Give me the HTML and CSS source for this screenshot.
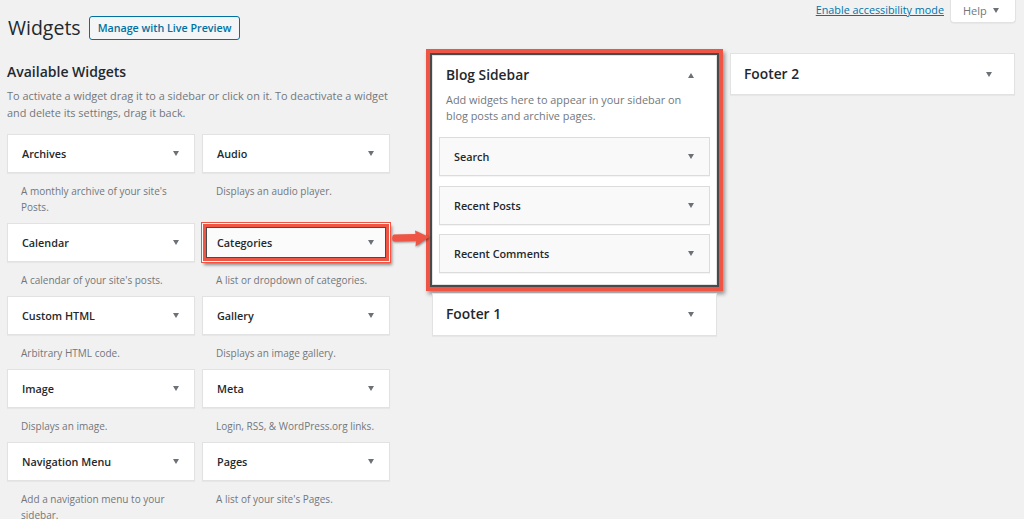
FILE: index.html
```html
<!DOCTYPE html>
<html lang="en">
<head>
<meta charset="utf-8">
<title>Widgets</title>
<link rel="stylesheet" href="styles.css">
</head>
<body>
<div class="wrap">
  <div class="topbar">
    <div class="header">
      <h1 class="page-title">Widgets</h1>
      <a class="btn-preview" href="#">Manage with Live Preview</a>
    </div>
    <div class="screen-meta">
      <a class="a11y-link" href="#">Enable accessibility mode</a>
      <button class="help-btn" type="button">Help <span class="tri tri-down"></span></button>
    </div>
  </div>

  <div class="columns">
    <section class="available">
      <h2 class="avail-title">Available Widgets</h2>
      <p class="avail-desc">To activate a widget drag it to a sidebar or click on it. To deactivate a widget<br>and delete its settings, drag it back.</p>
      <div class="widget-grid">
        <div class="widget-item">
          <div class="widget-box"><span class="widget-name">Archives</span><span class="tri tri-down"></span></div>
          <p class="widget-desc">A monthly archive of your site's Posts.</p>
        </div>
        <div class="widget-item">
          <div class="widget-box"><span class="widget-name">Audio</span><span class="tri tri-down"></span></div>
          <p class="widget-desc">Displays an audio player.</p>
        </div>
        <div class="widget-item">
          <div class="widget-box"><span class="widget-name">Calendar</span><span class="tri tri-down"></span></div>
          <p class="widget-desc">A calendar of your site's posts.</p>
        </div>
        <div class="widget-item item-annotated">
          <div class="widget-box box-highlight"><span class="widget-name">Categories</span><span class="tri tri-down"></span></div>
          <p class="widget-desc">A list or dropdown of categories.</p>
          <svg class="red-arrow" width="42" height="22" viewBox="0 0 42 22" aria-hidden="true">
            <path d="M4,6.5 C1.5,7.5 1.5,13 4,13.5 L26,13 L25.5,18.5 L39,9 L25,2.5 L25.5,6 Z" fill="#ef5545"/>
          </svg>
        </div>
        <div class="widget-item">
          <div class="widget-box"><span class="widget-name">Custom HTML</span><span class="tri tri-down"></span></div>
          <p class="widget-desc">Arbitrary HTML code.</p>
        </div>
        <div class="widget-item">
          <div class="widget-box"><span class="widget-name">Gallery</span><span class="tri tri-down"></span></div>
          <p class="widget-desc">Displays an image gallery.</p>
        </div>
        <div class="widget-item">
          <div class="widget-box"><span class="widget-name">Image</span><span class="tri tri-down"></span></div>
          <p class="widget-desc">Displays an image.</p>
        </div>
        <div class="widget-item">
          <div class="widget-box"><span class="widget-name">Meta</span><span class="tri tri-down"></span></div>
          <p class="widget-desc">Login, RSS, &amp; WordPress.org links.</p>
        </div>
        <div class="widget-item">
          <div class="widget-box"><span class="widget-name">Navigation Menu</span><span class="tri tri-down"></span></div>
          <p class="widget-desc">Add a navigation menu to your sidebar.</p>
        </div>
        <div class="widget-item">
          <div class="widget-box"><span class="widget-name">Pages</span><span class="tri tri-down"></span></div>
          <p class="widget-desc">A list of your site's Pages.</p>
        </div>
      </div>
    </section>

    <div class="sidebars">
      <div class="sidebar-col">
        <div class="sidebar sidebar-open sidebar-highlight">
          <div class="sidebar-head"><h3 class="sidebar-title">Blog Sidebar</h3><span class="tri tri-up"></span></div>
          <p class="sidebar-desc">Add widgets here to appear in your sidebar on blog posts and archive pages.</p>
          <div class="sidebar-widgets">
            <div class="widget-box widget-in-sidebar"><span class="widget-name">Search</span><span class="tri tri-down"></span></div>
            <div class="widget-box widget-in-sidebar"><span class="widget-name">Recent Posts</span><span class="tri tri-down"></span></div>
            <div class="widget-box widget-in-sidebar"><span class="widget-name">Recent Comments</span><span class="tri tri-down"></span></div>
          </div>
        </div>
        <div class="sidebar sidebar-closed footer-one">
          <div class="sidebar-head"><h3 class="sidebar-title">Footer 1</h3><span class="tri tri-down"></span></div>
        </div>
      </div>
      <div class="sidebar-col">
        <div class="sidebar sidebar-closed">
          <div class="sidebar-head"><h3 class="sidebar-title">Footer 2</h3><span class="tri tri-down"></span></div>
        </div>
      </div>
    </div>
  </div>
</div>
</body>
</html>
```

FILE: styles.css
```css
* { box-sizing: border-box; }

html, body {
  margin: 0;
  padding: 0;
  background: #f1f1f1;
  height: 100%;
  overflow: hidden;
}

body {
  font-family: "Open Sans", "Noto Sans", sans-serif;
  color: #23282d;
}

.wrap {
  padding: 0 8px 0 7px;
}

/* top bar */
.topbar {
  display: flex;
  justify-content: space-between;
  align-items: flex-start;
}

.header {
  display: flex;
  align-items: center;
  margin-top: 16px;
  margin-left: 1px;
}

.page-title {
  margin: 0;
  font-size: 19.5px;
  font-weight: 400;
  line-height: 24px;
  color: #23282d;
}

.btn-preview {
  margin-left: 8px;
  height: 24px;
  padding: 0 8px;
  display: inline-flex;
  align-items: center;
  border: 1px solid #0071a1;
  border-radius: 3px;
  background: #f3f5f6;
  color: #0071a1;
  font-size: 10.7px;
  font-weight: 600;
  text-decoration: none;
}

.screen-meta {
  display: flex;
  align-items: flex-start;
}

.a11y-link {
  margin-top: 0;
  line-height: 20px;
  font-size: 10.8px;
  color: #0073aa;
  text-decoration: underline;
}

.help-btn {
  margin-left: 6px;
  margin-top: -1px;
  width: 66px;
  height: 24px;
  padding: 0 0 0 12px;
  display: flex;
  align-items: center;
  gap: 6px;
  background: #fff;
  border: 1px solid #e2e2e2;
  border-top: none;
  border-radius: 0 0 4px 4px;
  box-shadow: 0 1px 1px rgba(0,0,0,.04);
  font-family: "Open Sans", "Noto Sans", sans-serif;
  font-size: 11px;
  color: #72777c;
}

/* triangles */
.tri {
  display: inline-block;
  width: 0;
  height: 0;
  border-left: 3.5px solid transparent;
  border-right: 3.5px solid transparent;
  flex: none;
}
.tri-down { border-top: 5px solid #6c7177; }
.tri-up { border-bottom: 5px solid #6c7177; }

/* columns */
.columns {
  display: flex;
  align-items: flex-start;
  margin-top: 13px;
}

.available {
  width: 383px;
  flex: none;
  margin-right: 42px;
}

.avail-title {
  margin: 9px 0 0;
  font-size: 14px;
  font-weight: 600;
  line-height: 20px;
}

.avail-desc {
  margin: 5px 0 0;
  font-size: 10.9px;
  line-height: 17px;
  color: #72777c;
  white-space: nowrap;
}

.widget-grid {
  margin-top: 13px;
  display: grid;
  grid-template-columns: 188px 188px;
  column-gap: 7px;
}

.widget-item {
  position: relative;
}

.widget-box {
  height: 39px;
  display: flex;
  align-items: center;
  justify-content: space-between;
  padding: 0 15.5px 0 14px;
  background: #fff;
  border: 1px solid #e2e2e2;
  box-shadow: 0 1px 1px rgba(0,0,0,.04);
}

.widget-name {
  font-size: 10.8px;
  font-weight: 600;
  color: #23282d;
}

.widget-desc {
  margin: 10px 0 8px;
  padding-left: 14px;
  font-size: 10px;
  line-height: 16px;
  color: #72777c;
}

/* annotations */
.box-highlight {
  background: #fbfbfb;
  box-shadow: inset 0 0 0 3px #ef5545, inset 0 0 0 4px #4a4a4a, 0 0 0 1px #ef5545, 2px 3px 3px rgba(0,0,0,.45);
  border-color: transparent;
}

.red-arrow {
  position: absolute;
  left: 100%;
  top: 5px;
  filter: drop-shadow(1px 1px 1px rgba(0,0,0,.45));
}

/* sidebars */
.sidebars {
  display: flex;
  gap: 13px;
  align-items: flex-start;
}

.sidebar-col {
  width: 285px;
  flex: none;
}

.sidebar {
  background: #fff;
  border: 1px solid #e2e2e2;
  box-shadow: 0 1px 1px rgba(0,0,0,.04);
}

.sidebar-head {
  display: flex;
  align-items: center;
  justify-content: space-between;
  padding: 0 22.5px 0 13px;
  height: 20px;
}

.sidebar-title {
  margin: 0;
  font-size: 13.8px;
  font-weight: 600;
  line-height: 20px;
  color: #23282d;
}

.sidebar-open {
  margin-top: 2px;
  padding: 9px 0 11px;
}

.sidebar-closed {
  height: 42px;
  padding-top: 10px;
}

.footer-one {
  height: 43px;
  margin-top: 8px;
}

.sidebar-desc {
  margin: 7px 0 0;
  padding: 0 22px 0 13px;
  font-size: 10.9px;
  line-height: 16px;
  color: #72777c;
}

.sidebar-widgets {
  margin-top: 13px;
  padding: 0 6px;
  display: flex;
  flex-direction: column;
  gap: 9.5px;
}

.widget-in-sidebar {
  background: #f9f9f9;
  border-color: #dcdcdc;
}

.sidebar-highlight {
  box-shadow: 0 0 0 2px #4a4a4a, 0 0 0 6px #ef5545, 2px 3px 4px 6px rgba(0,0,0,.4);
}
```
